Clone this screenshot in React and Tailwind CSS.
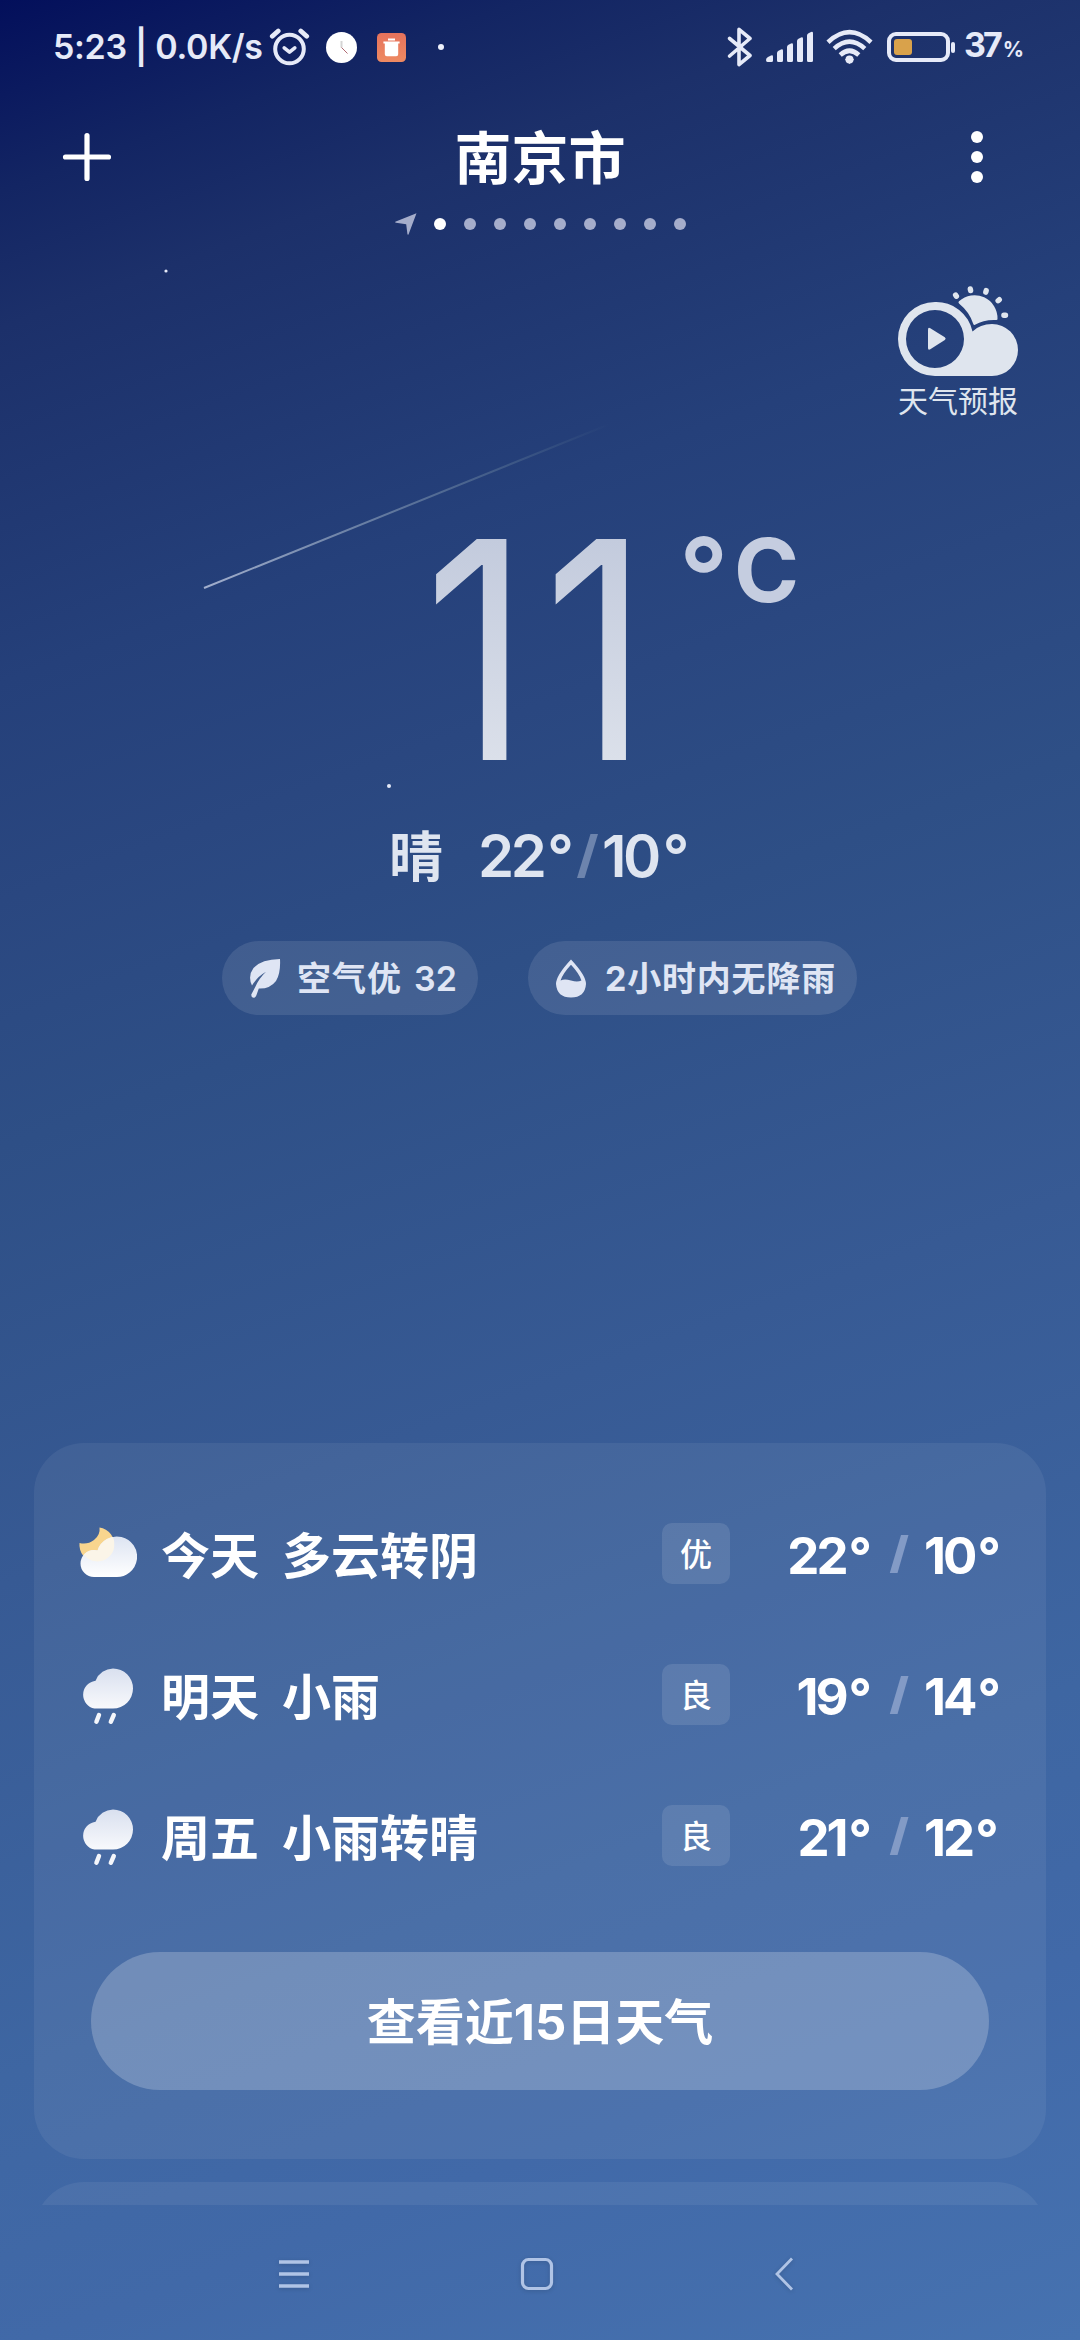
const days = [
  { icon: "cloudMoon", day: "今天", text: "多云转阴", aqi: "优", high: "22", low: "10" },
  { icon: "rain", day: "明天", text: "小雨", aqi: "良", high: "19", low: "14" },
  { icon: "rain", day: "周五", text: "小雨转晴", aqi: "良", high: "21", low: "12" },
];

function StatusBar() {
  return (
    <div className="h-[94px] shrink-0 flex items-center pl-[53px] pr-[56px] text-[#e6eaf8]">
      <div className="w-[212px] shrink-0 text-[34px] leading-[34px] font-semibold tracking-[-0.3px] whitespace-nowrap">
        5:23 | 0.0K/s
      </div>
      {/* alarm */}
      <svg className="ml-[4px] w-[41px] h-[40px] shrink-0" viewBox="0 0 41 40" fill="none" stroke="currentColor" strokeWidth="4" strokeLinecap="round">
        <circle cx="20.5" cy="22" r="14.3" strokeWidth="4" />
        <path d="M3.300 9.200 9.200 4M37.700 9.200 31.800 4" strokeWidth="4.800" />
        <path d="M15.200 20.800l5.300 4.400 5.300-4.400" strokeLinejoin="round" strokeWidth="3.600" />
      </svg>
      <svg className="ml-[16px] w-[31px] h-[31px] shrink-0" viewBox="0 0 31 31" fill="none">
        <circle cx="15.5" cy="15.5" r="15.5" fill="#fff" />
        <path d="M15.500 9v6.500" stroke="#d5d5d5" strokeWidth="2" />
        <path d="M15.500 15.500l6 6" stroke="#b06a72" strokeWidth="1" />
      </svg>
      <svg className="ml-[20px] w-[29px] h-[29px] shrink-0" viewBox="0 0 29 29">
        <defs>
          <linearGradient id="trash" x1="0" y1="0" x2="0" y2="1">
            <stop offset="0" stopColor="#e5725c" />
            <stop offset="1" stopColor="#ee8a62" />
          </linearGradient>
        </defs>
        <rect width="29" height="29" rx="4.5" fill="url(#trash)" />
        <path d="M11 5.600h7v1.800h-7zM6.400 8.600h16.200v2H21.200V21.200a2 2 0 0 1-2 2H9.800a2 2 0 0 1-2-2V10.600H6.400z" fill="#fff" />
      </svg>
      <div className="ml-[32px] size-1.5 rounded-full bg-[#eef1fb]" />

      {/* bluetooth */}
      <svg className="ml-auto w-[26px] h-[40px] shrink-0" viewBox="0 0 26 40" fill="none" stroke="currentColor" strokeWidth="3.600" strokeLinecap="round" strokeLinejoin="round">
        <path d="M2.600 11.500 23 28.500 12 37.600V2.400L23 11.500 2.600 29" />
      </svg>
      {/* signal */}
      <svg className="ml-[12px] w-[50px] h-[32px] shrink-0" viewBox="0 0 50 32" fill="currentColor">
        <path d="M1 29q0-2 2-3l3-1.500q2-.8 2 1v4q0 1.500-1.500 1.500H2.500Q1 31 1 29z" />
        <path d="M12 22q0-1.600 1.500-2.300l2.500-1.200q2-.8 2 1.200v9.800q0 1.500-1.500 1.500h-3Q12 31 12 29.500z" />
        <path d="M22 16q0-1.600 1.500-2.300l2.500-1.200q2-.8 2 1.200v15.800q0 1.500-1.500 1.500h-3Q22 31 22 29.500z" />
        <path d="M32 10q0-1.600 1.500-2.300l2.500-1.200q2-.8 2 1.200v21.800q0 1.500-1.500 1.500h-3Q32 31 32 29.500z" />
        <path d="M42 4.500q0-1.600 1.500-2.300L46 1q2-.8 2 1.200v27.300q0 1.500-1.500 1.500h-3Q42 31 42 29.500z" />
      </svg>
      {/* wifi */}
      <svg className="ml-[11px] w-[47px] h-[36px] shrink-0" viewBox="0 0 47 36" fill="none" stroke="currentColor" strokeWidth="4.600">
        <path d="M2 13.200Q23.500-6.800 45 13.200" />
        <path d="M8.200 19.600Q23.500 5.500 38.800 19.600" />
        <path d="M14.200 26Q23.500 17.500 32.800 26" />
        <path d="M19 30.500q4.500-4.200 9 0L23.500 35z" fill="currentColor" stroke="none" />
        <circle cx="23.500" cy="30.600" r="4" fill="currentColor" stroke="none" />
      </svg>
      {/* battery */}
      <div className="ml-[14px] w-[63px] h-[30px] shrink-0 rounded-[9px] border-4 border-[#e6eaf8] p-[3px]">
        <div className="h-full w-[18px] rounded-[3px] bg-[#d9a24b]" />
      </div>
      <div className="ml-[1px] w-1 h-[11px] shrink-0 rounded-full bg-[#e6eaf8]" />
      <div className="ml-[9px] flex items-baseline font-bold leading-[34px] whitespace-nowrap">
        <span className="text-[34px] tracking-[-3px]">37</span>
        <span className="text-[21px] ml-[3px]">%</span>
      </div>
    </div>
  );
}

function Header() {
  return (
    <>
      <div className="mt-[6px] h-[114px] shrink-0 flex items-center justify-between pl-[62px] pr-[97px] text-white">
        <svg className="w-[50px] h-[50px]" viewBox="0 0 50 50" stroke="currentColor" strokeWidth="5.200" strokeLinecap="round">
          <path d="M25 3.500v43M3.500 25h43" />
        </svg>
        <h1 className="mr-[3px] pt-[4px] text-[57px] leading-[110px] font-bold">南京市</h1>
        <div className="w-3 flex flex-col gap-2">
          <div className="size-3 rounded-full bg-white" />
          <div className="size-3 rounded-full bg-white" />
          <div className="size-3 rounded-full bg-white" />
        </div>
      </div>
      <div className="h-5 shrink-0 flex items-center pl-[395px]">
        <svg className="w-[22px] h-[22px] mr-[17px] text-[#a5adcb]" viewBox="0 0 22 22" fill="currentColor">
          <path d="M21.500.3 13.600 21.200q-.8 1.200-1.200-.2L11.200 11.200 1 9.800q-1.600-.5-.2-1.300z" />
        </svg>
        <div className="flex gap-[18px]">
          <div className="size-3 rounded-full bg-white" />
          {Array.from({ length: 8 }).map((_, i) => (
            <div key={i} className="size-3 rounded-full bg-[#a5adcb]" />
          ))}
        </div>
      </div>
    </>
  );
}

function ForecastVideo() {
  return (
    <div className="mt-[52px] ml-[898px] w-[120px] h-[130px] shrink-0 text-[#dfe5ee]">
      <svg className="block w-[120px] h-[90px]" viewBox="0 0 120 90" fill="currentColor">
        <path
          fillRule="evenodd"
          d="M37 16a37 37 0 0 1 37.500 29.500Q82 38 94 38a26 26 0 0 1 0 52H37a37 37 0 0 1 0-74zM37 24a29 29 0 1 0 0 58 29 29 0 0 0 0-58z"
        />
        <path d="M30 43.500q0-2.500 2.300-1.200l14.500 9q1.800 1.400 0 2.800l-14.500 9.200Q30 64.500 30 62z" />
        <path d="M61 17.500q-1.200-1.200 0-2.300A23 23 0 0 1 99.500 33q.2 1.200-1.500 1.100-12-.6-21 4.700-1.200.6-1.700-.8Q71.500 26 61 17.500z" />
        <g stroke="currentColor" strokeWidth="5.400" strokeLinecap="round">
          <path d="M57.600 9l.8 1.200M72.300 3l.3 1.600M88.200 4.600l-.4 1.600M101.300 13.700l-1.200 1M107.500 29.200h-1.600" />
        </g>
      </svg>
      <div className="mt-[10px] text-[30px] leading-[30px] whitespace-nowrap">天气预报</div>
    </div>
  );
}

function CurrentWeather() {
  return (
    <>
      <div className="mt-[123px] h-[221px] shrink-0 flex pl-[424px]">
        <div className="w-[255px] origin-left scale-x-[0.85] text-[304px] leading-[221px] font-normal tracking-[17px] bg-linear-to-b from-[#c3cbdd] to-[#dbe0ea] bg-clip-text text-transparent">
          11
        </div>
        <div className="flex text-[#c5cde0] font-bold">
          <span className="w-[55px] text-[108px] leading-[74px] font-semibold">°</span>
          <span className="text-[88px] leading-[62px]">C</span>
        </div>
      </div>
      <div className="mt-[64px] h-[64px] shrink-0 flex items-center pl-[389px] text-[#dfe5f0] font-semibold leading-[64px]">
        <span className="w-[89px] pt-[3px] text-[54px] font-bold">晴</span>
        <span className="w-[98px] text-[58px] tracking-[-3.500px]">
          22<span className="ml-[4px]">°</span>
        </span>
        <svg className="w-[23px] h-[46px] mr-[3px]" viewBox="0 0 23 46">
          <path d="M14.500 1H22L8.500 45H1z" fill="#6d84ad" />
        </svg>
        <span className="text-[58px] tracking-[-3.500px]">
          10<span className="ml-[5px]">°</span>
        </span>
      </div>
      <div className="mt-[53px] shrink-0 flex gap-[50px] pl-[222px] text-[#dfe5f4] text-[34px] leading-[74px] font-bold">
        <div className="w-[256px] h-[74px] rounded-full bg-[#ffffff1a] flex items-center pl-[27px] whitespace-nowrap">
          <svg className="w-[32px] h-[40px] mr-[16px]" viewBox="0 0 32 40" fill="currentColor">
            <path d="M31 1Q12 1.500 4.500 10-1.500 18 3 27.500 8 19 17 13.800 10 20.500 6.500 28.500L2.300 36.500Q2 39.500 4.500 39.800 6.500 39.800 7.300 37.500L9.800 30.600Q21 31 27 23 31.800 15 31 1z" />
          </svg>
          <span className="pt-[2px] tracking-[1px]">空气优</span>
          <span className="pt-[2px] ml-[12px] tracking-[0.200px] font-semibold">32</span>
        </div>
        <div className="w-[329px] h-[74px] rounded-full bg-[#ffffff1a] flex items-center pl-[27px] whitespace-nowrap">
          <svg className="w-[32px] h-[40px] mr-[18px]" viewBox="0 0 32 40" fill="currentColor">
            <path
              fillRule="evenodd"
              d="M16 1.500Q31 17.500 31 26 30 39.500 16 39.500T1 26Q1 17.500 16 1.500zM16 6.800Q7.500 16 5.600 22.500 9.500 20.300 16 22.500T26.400 22.500Q24.500 16 16 6.800z"
            />
          </svg>
          <span className="pt-[2px] tracking-[0.800px]">2小时内无降雨</span>
        </div>
      </div>
    </>
  );
}

function DayIcon({ type }) {
  if (type === "cloudMoon") {
    return (
      <svg className="w-[60px] h-[60px]" viewBox="-0.5 0 60 60">
        <defs>
          <linearGradient id="cloudA" x1="0" y1="0" x2="0" y2="1">
            <stop offset="0" stopColor="#dde4f2" />
            <stop offset="1" stopColor="#ffffff" />
          </linearGradient>
          <clipPath id="moonClip">
            <path d="M22 3.500a17 17 0 1 1-19 15.500Q9 21 15.500 16.500T22 3.500z" />
          </clipPath>
        </defs>
        <path d="M22 3.500a17.500 17.500 0 1 1-20 15.500Q10 21 16.500 16T22 3.500z" fill="#f8d58e" />
        <path d="M16.500 53a13.500 13.500 0 0 1 0-27q2 0 3.500.4A20.300 20.300 0 1 1 38 53z" fill="url(#cloudA)" />
        <path d="M16.500 53a13.500 13.500 0 0 1 0-27q2 0 3.500.4A20.300 20.300 0 1 1 38 53z" fill="#fbf5e8" clipPath="url(#moonClip)" />
      </svg>
    );
  }
  return (
    <svg className="w-[60px] h-[60px]" viewBox="1 0 60 60">
      <defs>
        <linearGradient id="cloudB" x1="0" y1="0" x2="0" y2="1">
          <stop offset="0" stopColor="#d9e0ef" />
          <stop offset="1" stopColor="#f8f9fc" />
        </linearGradient>
      </defs>
      <path d="M18.500 43.500a14 14 0 0 1 0-27.500q.6-.1 1.200-.6A19 19 0 0 1 37 3.500a20 20 0 0 1 0 40z" fill="url(#cloudB)" />
      <path d="M23 50l-2.600 6.800M37.800 50l-3 6.800" stroke="#f4f6fb" strokeWidth="4.400" strokeLinecap="round" />
    </svg>
  );
}

function DayRow({ item }) {
  return (
    <div className="h-[141px] flex items-center pl-[43px] text-white text-[49px] font-bold whitespace-nowrap">
      <DayIcon type={item.icon} />
      <span className="ml-[24px] w-[121px] pt-[5px] leading-[61px]">{item.day}</span>
      <span className="w-[380px] pt-[5px] leading-[61px]">{item.text}</span>
      <div className="w-[68px] h-[61px] rounded-[10px] bg-[#ffffff1c] text-center text-[32px] leading-[63px] font-medium">
        {item.aqi}
      </div>
      <div className="w-[139px] pt-[3px] text-right text-[51px] leading-[61px] tracking-[-3px]">
        {item.high}
        <span className="ml-[3px]">°</span>
      </div>
      <svg className="ml-[20px] mr-[15px] w-[20px] h-[40px]" viewBox="0 0 20 40">
        <path d="M12 1H19.500L8.500 39H.8z" fill="#839bc6" />
      </svg>
      <div className="pt-[3px] text-[51px] leading-[61px] tracking-[-3px]">
        {item.low}
        <span className="ml-[3px]">°</span>
      </div>
    </div>
  );
}

function NavBar() {
  return (
    <div className="h-[135px] shrink-0 flex items-center pl-[278px] text-[#b0c4e6]">
      <svg className="mt-[3px] w-[32px] h-[36px] drop-shadow-sm" viewBox="0 0 32 36" stroke="currentColor" strokeWidth="3.400">
        <path d="M1 6h30M1 18h30M1 30h30" />
      </svg>
      <svg className="mt-[3px] ml-[210px] w-[34px] h-[36px] drop-shadow-sm" viewBox="0 0 34 36" fill="none" stroke="currentColor" strokeWidth="3.200">
        <rect x="2.500" y="3.500" width="29" height="29" rx="6" />
      </svg>
      <svg className="mt-[3px] ml-[220px] w-[22px] h-[36px] drop-shadow-sm" viewBox="0 0 22 36" fill="none" stroke="currentColor" strokeWidth="2.800">
        <path d="M18 2.500 3 18l15 15.500" />
      </svg>
    </div>
  );
}

// Stars and the shooting star floating behind the temperature
function NightSky() {
  return (
    <svg className="absolute inset-0 w-[1080px] h-[2340px]" viewBox="0 0 1080 2340">
      <defs>
        <linearGradient id="meteor" gradientUnits="userSpaceOnUse" x1="204" y1="588" x2="610" y2="424">
          <stop offset="0" stopColor="#b9c3dc" stopOpacity="0.85" />
          <stop offset="0.5" stopColor="#9fb3c4" stopOpacity="0.45" />
          <stop offset="1" stopColor="#8fb0a8" stopOpacity="0" />
        </linearGradient>
      </defs>
      <path d="M204 588 610 424" stroke="url(#meteor)" strokeWidth="2" />
      <circle cx="166" cy="271" r="1.600" fill="#e6eaf8" />
      <circle cx="389" cy="786" r="2" fill="#e6eaf8" />
    </svg>
  );
}

export default function App() {
  return (
    <div className="relative w-[1080px] h-[2340px] overflow-hidden font-['Inter','Noto_Sans_CJK_SC',sans-serif] bg-[linear-gradient(160deg,#030f5b_0%,#132563_7%,#1c306a_12%,#25407a_25%,#2a4780_33%,#2e4f86_42%,#375a94_58%,#3e66a2_76%,#4169a8_86%,#4672b0_100%)]">
      <NightSky />
      <div className="relative h-full flex flex-col">
        <StatusBar />
        <Header />
        <ForecastVideo />
        <CurrentWeather />

        <div className="mt-auto h-[762px] shrink-0 overflow-hidden px-[34px]">
          <div className="h-[716px] rounded-[50px] bg-[#ffffff10] pt-[40px]">
            {days.map((item) => (
              <DayRow key={item.day} item={item} />
            ))}
            <button className="block mx-auto mt-[46px] w-[898px] h-[138px] rounded-full bg-[#ffffff38] pt-[4px] text-white text-[49px] leading-[134px] font-bold">
              查看近15日天气
            </button>
          </div>
          <div className="mt-[23px] h-[200px] rounded-[50px] bg-[#ffffff10]" />
        </div>
        <NavBar />
      </div>
    </div>
  );
}
